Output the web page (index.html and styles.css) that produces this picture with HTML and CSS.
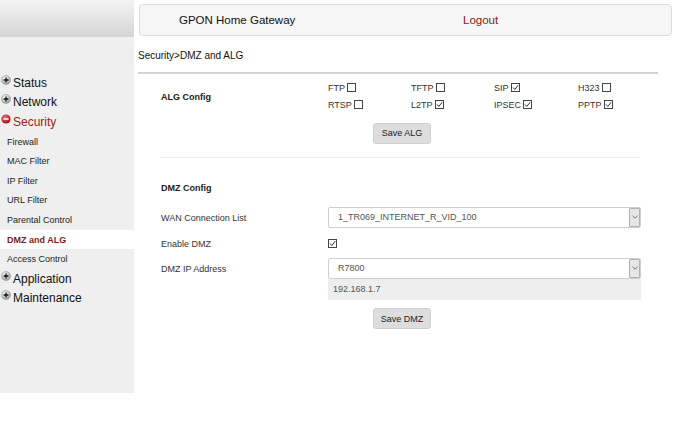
FILE: index.html
```html
<!DOCTYPE html>
<html>
<head>
<meta charset="utf-8">
<link rel="stylesheet" href="styles.css">
</head>
<body>
<div class="page">
  <aside class="sidebar">
    <div class="side-top"></div>
    <ul class="menu">
      <li class="top"><svg class="ico" viewBox="0 0 10 10"><defs><radialGradient id="g1" cx="40%" cy="35%" r="65%"><stop offset="0" stop-color="#ffffff"/><stop offset="1" stop-color="#9a9a9a"/></radialGradient></defs><circle cx="5" cy="5" r="4.6" fill="url(#g1)" stroke="#888" stroke-width="0.4"/><path d="M2.6 5H7.4M5 2.6V7.4" stroke="#111" stroke-width="1.3"/></svg>Status</li>
      <li class="top"><svg class="ico" viewBox="0 0 10 10"><circle cx="5" cy="5" r="4.6" fill="url(#g1)" stroke="#888" stroke-width="0.4"/><path d="M2.6 5H7.4M5 2.6V7.4" stroke="#111" stroke-width="1.3"/></svg>Network</li>
      <li class="top open"><svg class="ico" viewBox="0 0 10 10"><defs><radialGradient id="g2" cx="40%" cy="35%" r="65%"><stop offset="0" stop-color="#f07070"/><stop offset="1" stop-color="#a01010"/></radialGradient></defs><circle cx="5" cy="5" r="4.6" fill="url(#g2)"/><path d="M2.4 5H7.6" stroke="#fff" stroke-width="1.5"/></svg>Security</li>
      <li class="sub">Firewall</li>
      <li class="sub">MAC Filter</li>
      <li class="sub">IP Filter</li>
      <li class="sub">URL Filter</li>
      <li class="sub">Parental Control</li>
      <li class="sub active">DMZ and ALG</li>
      <li class="sub">Access Control</li>
      <li class="top"><svg class="ico" viewBox="0 0 10 10"><circle cx="5" cy="5" r="4.6" fill="url(#g1)" stroke="#888" stroke-width="0.4"/><path d="M2.6 5H7.4M5 2.6V7.4" stroke="#111" stroke-width="1.3"/></svg>Application</li>
      <li class="top"><svg class="ico" viewBox="0 0 10 10"><circle cx="5" cy="5" r="4.6" fill="url(#g1)" stroke="#888" stroke-width="0.4"/><path d="M2.6 5H7.4M5 2.6V7.4" stroke="#111" stroke-width="1.3"/></svg>Maintenance</li>
    </ul>
  </aside>
  <main class="main">
    <header class="head">
      <span class="title">GPON Home Gateway</span>
      <span class="logout">Logout</span>
    </header>
    <div class="crumb">Security&gt;DMZ and ALG</div>
    <div class="rule"></div>
    <section class="sec">
      <div class="alg">
        <div class="lbl bold">ALG Config</div>
        <div class="checks">
          <span class="ck">FTP<svg class="box" viewBox="0 0 9 9"><rect x="0.5" y="0.5" width="8" height="8" fill="#fff" stroke="#444"/></svg></span>
          <span class="ck">TFTP<svg class="box" viewBox="0 0 9 9"><rect x="0.5" y="0.5" width="8" height="8" fill="#fff" stroke="#444"/></svg></span>
          <span class="ck">SIP<svg class="box" viewBox="0 0 9 9"><rect x="0.5" y="0.5" width="8" height="8" fill="#fff" stroke="#444"/><path d="M2 4.5L3.8 6.5L7.2 2.2" fill="none" stroke="#333" stroke-width="1"/></svg></span>
          <span class="ck">H323<svg class="box" viewBox="0 0 9 9"><rect x="0.5" y="0.5" width="8" height="8" fill="#fff" stroke="#444"/></svg></span>
          <span class="ck">RTSP<svg class="box" viewBox="0 0 9 9"><rect x="0.5" y="0.5" width="8" height="8" fill="#fff" stroke="#444"/></svg></span>
          <span class="ck">L2TP<svg class="box" viewBox="0 0 9 9"><rect x="0.5" y="0.5" width="8" height="8" fill="#fff" stroke="#444"/><path d="M2 4.5L3.8 6.5L7.2 2.2" fill="none" stroke="#333" stroke-width="1"/></svg></span>
          <span class="ck">IPSEC<svg class="box" viewBox="0 0 9 9"><rect x="0.5" y="0.5" width="8" height="8" fill="#fff" stroke="#444"/><path d="M2 4.5L3.8 6.5L7.2 2.2" fill="none" stroke="#333" stroke-width="1"/></svg></span>
          <span class="ck">PPTP<svg class="box" viewBox="0 0 9 9"><rect x="0.5" y="0.5" width="8" height="8" fill="#fff" stroke="#444"/><path d="M2 4.5L3.8 6.5L7.2 2.2" fill="none" stroke="#333" stroke-width="1"/></svg></span>
        </div>
      </div>
      <div class="btn-row alg-btn"><span class="btn">Save ALG</span></div>
      <div class="divider"></div>
      <div class="lbl bold dmz-title">DMZ Config</div>
      <div class="row wan">
        <div class="lbl">WAN Connection List</div>
        <div class="select"><span class="sel-text">1_TR069_INTERNET_R_VID_100</span><span class="arrow"><svg viewBox="0 0 6 4" width="6" height="4"><path d="M0.5 0.8L3 3.2L5.5 0.8" fill="none" stroke="#666" stroke-width="0.9"/></svg></span></div>
      </div>
      <div class="row enable">
        <div class="lbl">Enable DMZ</div>
        <svg class="box" viewBox="0 0 9 9"><rect x="0.5" y="0.5" width="8" height="8" fill="#fff" stroke="#444"/><path d="M2 4.5L3.8 6.5L7.2 2.2" fill="none" stroke="#333" stroke-width="1"/></svg>
      </div>
      <div class="row ip">
        <div class="lbl">DMZ IP Address</div>
        <div class="ipcol">
          <div class="select"><span class="sel-text">R7800</span><span class="arrow"><svg viewBox="0 0 6 4" width="6" height="4"><path d="M0.5 0.8L3 3.2L5.5 0.8" fill="none" stroke="#666" stroke-width="0.9"/></svg></span></div>
          <div class="ipval">192.168.1.7</div>
        </div>
      </div>
      <div class="btn-row dmz-btn"><span class="btn">Save DMZ</span></div>
    </section>
  </main>
</div>
</body>
</html>
```
FILE: styles.css
```css
html, body {
  margin: 0;
  padding: 0;
  background: #fff;
  font-family: "Liberation Sans", Arial, sans-serif;
  color: #222;
}
.page {
  display: flex;
  align-items: flex-start;
}
.sidebar {
  width: 134px;
  height: 393px;
  background: #efefef;
  flex: none;
}
.side-top {
  height: 37px;
  background: linear-gradient(#f5f4f4, #d5d5d5);
}
.menu {
  list-style: none;
  margin: 36px 0 0;
  padding: 0;
}
.menu li {
  height: 19.6px;
  display: flex;
  align-items: center;
  white-space: nowrap;
}
.menu li.top {
  font-size: 12px;
  color: #111;
  padding-left: 1px;
}
.menu li.open {
  color: #9e1b1b;
}
.ico {
  width: 10px;
  height: 10px;
  margin-right: 2px;
  position: relative;
  top: -3px;
}
.menu li.sub {
  font-size: 9px;
  color: #222;
  padding-left: 7px;
}
.menu li.active {
  background: #fff;
  color: #7b1c1c;
  font-weight: bold;
}
.main {
  flex: 1;
  padding-left: 4px;
}
.head {
  margin: 4px 0 0 1px;
  width: 533px;
  height: 32px;
  box-sizing: border-box;
  border: 1px solid #dcdcdc;
  border-radius: 4px;
  background: #f6f6f6;
  display: flex;
  align-items: center;
  font-size: 11.5px;
}
.title {
  width: 323px;
  padding-left: 39px;
  box-sizing: border-box;
  color: #111;
}
.logout {
  color: #7b1c1c;
}
.crumb {
  margin-top: 13px;
  height: 13px;
  line-height: 13px;
  font-size: 10px;
  color: #111;
}
.rule {
  margin-top: 10px;
  width: 520px;
  border-top: 2px solid #d4d4d4;
}
.sec {
  padding-left: 23px;
  width: 480px;
}
.lbl {
  font-size: 9px;
  color: #333;
  width: 167px;
  flex: none;
}
.bold {
  font-weight: bold;
  color: #222;
}
.alg {
  margin-top: 5px;
  display: flex;
  align-items: center;
}
.alg .lbl {
  position: relative;
  top: 1px;
}
.checks {
  display: grid;
  grid-template-columns: 83px 83px 84px 60px;
  grid-auto-rows: 17px;
}
.ck {
  display: flex;
  align-items: center;
  font-size: 9px;
  color: #333;
}
.box {
  width: 9px;
  height: 9px;
  margin-left: 2px;
  flex: none;
}
.btn-row {
  padding-left: 212px;
}
.alg-btn {
  margin-top: 9px;
}
.btn {
  display: inline-flex;
  align-items: center;
  justify-content: center;
  width: 58px;
  height: 21px;
  box-sizing: border-box;
  background: #dddddd;
  border: 1px solid #cfcfcf;
  border-radius: 3px;
  font-size: 9px;
  color: #222;
}
.divider {
  margin: 13px 0 0 -1px;
  width: 480px;
  border-top: 1px solid #ececec;
}
.dmz-title {
  margin-top: 24px;
  height: 13px;
  line-height: 13px;
}
.row {
  display: flex;
  align-items: center;
}
.wan {
  margin-top: 12px;
}
.wan .lbl {
  position: relative;
  top: 1px;
}
.enable {
  margin-top: 7px;
  height: 18px;
}
.enable .box {
  margin-left: 0;
}
.ip {
  margin-top: 5px;
  align-items: flex-start;
}
.ip .lbl {
  line-height: 21px;
  position: relative;
  top: 1px;
}
.select {
  width: 313px;
  height: 21px;
  box-sizing: border-box;
  border: 1px solid #cfcfcf;
  border-radius: 2px;
  background: #fff;
  display: flex;
  align-items: center;
  font-size: 9px;
  color: #555;
}
.sel-text {
  flex: 1;
  padding-left: 9px;
}
.arrow {
  width: 11px;
  height: 19px;
  box-sizing: border-box;
  background: #e6e6e6;
  border: 1px solid #b0b0b0;
  border-radius: 1px;
  display: flex;
  align-items: center;
  justify-content: center;
}
.ipcol {
  width: 313px;
}
.ipval {
  height: 21px;
  line-height: 21px;
  background: #eeeeee;
  font-size: 9px;
  color: #555;
  padding-left: 5px;
}
.dmz-btn {
  margin-top: 8px;
}
```
